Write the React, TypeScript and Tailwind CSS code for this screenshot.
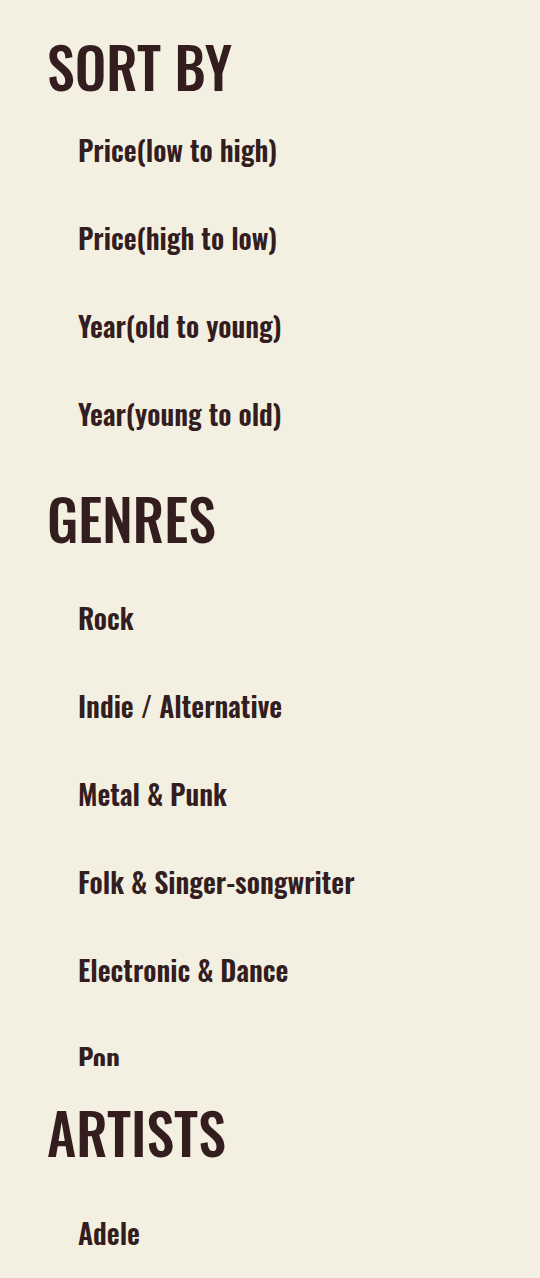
import React from 'react';

const sortOptions = [
  'Price(low to high)',
  'Price(high to low)',
  'Year(old to young)',
  'Year(young to old)',
];

const genres = [
  'Rock',
  'Indie / Alternative',
  'Metal & Punk',
  'Folk & Singer-songwriter',
  'Electronic & Dance',
  'Pop',
  'Hip-Hop & Rap',
  'Jazz',
];

const artists = ['Adele', 'Arctic Monkeys', 'Bon Iver'];

const FilterList = ({ items, className = '' }: { items: string[]; className?: string }) => (
  <ul className={`pl-[31px] flex flex-col ${className}`}>
    {items.map(item => (
      <li key={item} className="text-[28px] leading-[88px] font-semibold whitespace-nowrap cursor-pointer">
        {item}
      </li>
    ))}
  </ul>
);

export default function App() {
  return (
    <div
      className="bg-[#f4f0e1] text-[#331d1e] h-[1278px] overflow-hidden px-[47px] pt-[38px] flex flex-col"
      style={{ fontFamily: 'Oswald, "Roboto Condensed", "Open Sans Condensed", sans-serif' }}
    >
      <h2 className="text-[56px] leading-none font-medium">SORT BY</h2>
      <FilterList items={sortOptions} className="mt-[12px]" />

      <h2 className="text-[56px] leading-none font-medium mt-[32px]">GENRES</h2>
      <FilterList items={genres} className="mt-[28px] h-[492px] shrink-0 overflow-hidden" />

      <h2 className="text-[56px] leading-none font-medium mt-[38px]">ARTISTS</h2>
      <FilterList items={artists} className="mt-[29px]" />
    </div>
  );
}
